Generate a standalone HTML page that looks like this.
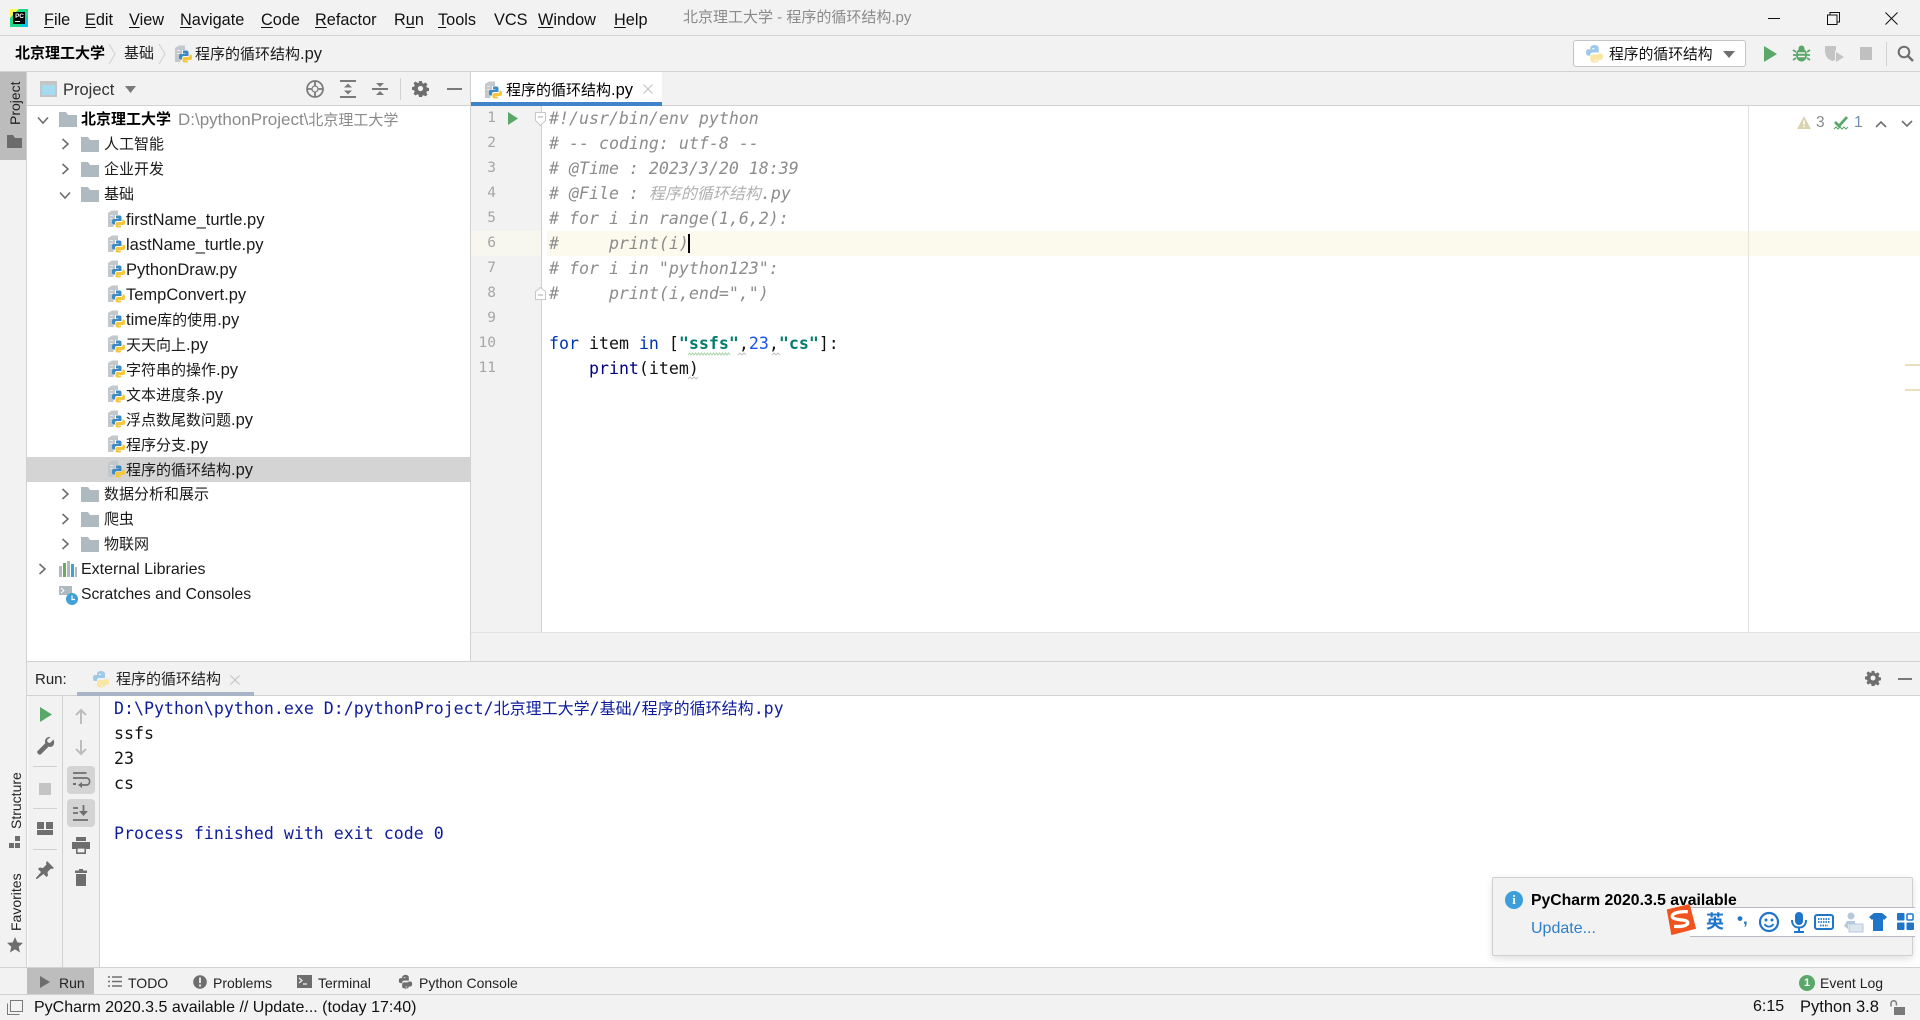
<!DOCTYPE html>
<html lang="zh"><head><meta charset="utf-8"><title>PyCharm</title>
<style>
*{box-sizing:border-box}
html,body{margin:0;padding:0;width:1920px;height:1020px;overflow:hidden;background:#fff}
body{position:relative;font-family:"Liberation Sans","Noto Sans CJK SC",sans-serif;font-size:15px;color:#1a1a1a}
.b{position:absolute}
.t{position:absolute;white-space:nowrap;line-height:24px;height:24px}
.n{margin-top:1px}
.l{font-size:16.5px}
.m{font-size:16.3px;color:#111;margin-top:1px}
.m u{text-underline-offset:2px}
.c{position:absolute;left:549px;white-space:pre;line-height:25px;height:25px;font-family:"DejaVu Sans Mono","Noto Sans CJK SC",monospace;font-size:16.6px}
.cj{font-size:16px}
.cm{font-style:italic;color:#8c8c8c}
.ln{position:absolute;left:472px;width:24px;text-align:right;line-height:25px;height:25px;font-family:"DejaVu Sans Mono",monospace;font-size:14.5px;color:#a6a6a6}
.kw{color:#0033b3}.st{color:#067d6a;font-weight:bold}.num{color:#1750eb}.fn{color:#000080}
.o{position:absolute;left:114px;white-space:pre;line-height:25px;height:25px;font-family:"DejaVu Sans Mono","Noto Sans CJK SC",monospace;font-size:16.6px;color:#111}
.o.blue{color:#0f1c9c}
svg.i{position:absolute;overflow:visible}
.r{position:absolute;transform-origin:0 0;transform:rotate(-90deg);white-space:nowrap;line-height:16px;font-size:14px;color:#222}
.bt{font-size:14px;color:#222}
</style></head><body>
<svg width="0" height="0" style="position:absolute">
<defs>
<symbol id="py" viewBox="0 0 18 18"><path d="M1 3 5 .5h6V5H8v4.500H6.500V17H1z" fill="#c2c8cc"/><path d="M3 5h3v1H3zM3 8h2.500v1H3z" fill="#e9ebec"/><path d="M9 5.500h3.500a2 2 0 0 1 2 2V11H10a2 2 0 0 0-2 2v1.500H7a2 2 0 0 1-2-2v-1.500a2 2 0 0 1 2-2h4.500V8.500H9z" fill="#3d8bc4"/><path d="M15.500 9.500H16a2 2 0 0 1 2 2v1.500a2 2 0 0 1-2 2h-4.500v.5H14v1a1 1 0 0 1-1 1h-2.500a2 2 0 0 1-2-2V14a2 2 0 0 1 2-2H14a1.500 1.500 0 0 0 1.500-1.500z" fill="#f5c73d"/></symbol>
<symbol id="pl" viewBox="0 0 18 18"><path d="M5 8V4c0-2 2-3 4-3s4 1 4 3v4H7.500C6 8 5 9 5 10v1H3c-1.500 0-2-1.500-2-3s.5-3 2-3h6V4H7" fill="#9fc9e8"/><path d="M13 9h2c1.500 0 2 1.500 2 3s-.5 3-2 3H9v1h2v-2h2v1c0 2-2 2.500-4 2.500S5 17 5 15v-3c0-1 1-2 2.500-2H11c1 0 2-.5 2-1z" fill="#f8e6a5"/></symbol>
<symbol id="fd" viewBox="0 0 18 15"><path d="M0 0h7l2 3h9v12H0z" fill="#aeb9c0"/></symbol>
<symbol id="ch" viewBox="0 0 10 12"><path d="M2.500 1 8 6l-5.500 5" fill="none" stroke="#6e6e6e" stroke-width="1.600"/></symbol>
<symbol id="cd" viewBox="0 0 12 10"><path d="M1 2.500 6 8l5-5.500" fill="none" stroke="#6e6e6e" stroke-width="1.600"/></symbol>
<symbol id="gear" viewBox="0 0 18 18"><path d="M7.500 1h3l.5 2.300 1.400.6 2-1.300 2 2-1.300 2 .6 1.400 2.300.5v3l-2.300.5-.6 1.400 1.300 2-2 2-2-1.300-1.400.6-.5 2.300h-3L7 15.700l-1.400-.6-2 1.300-2-2 1.300-2L2.300 11 0 10.500v-3L2.300 7l.6-1.400-1.300-2 2-2 2 1.300L7 3.300z" fill="#6e6e6e"/><circle cx="9" cy="9" r="2.800" fill="#f2f2f2"/></symbol>
</defs></svg>

<!-- title bar -->
<div class="b" style="left:0;top:0;width:1920px;height:71px;background:#f2f2f2"></div>
<div class="b" style="left:0;top:35px;width:1920px;height:1px;background:#d1d1d1"></div>
<div class="b" style="left:0;top:71px;width:1920px;height:1px;background:#d1d1d1"></div>
<svg class="i" style="left:10px;top:9px" width="18" height="18" viewBox="0 0 18 18"><path d="M0 0h18v18H0z" fill="#21d789"/><path d="M0 0h9L0 9z" fill="#fcf84a"/><path d="M18 18V8l-8 10z" fill="#07c3f2"/><rect x="3" y="3" width="12" height="12" fill="#000"/><rect x="5" y="12" width="5" height="1" fill="#fff"/></svg>
<div class="t" style="left:11px;top:7px;width:17px;text-align:center;color:#fff;font:bold 6.500px/20px 'Liberation Sans',sans-serif;height:20px;letter-spacing:-.2px">PC</div>
<div class="t m" style="left:44px;top:7px"><u>F</u>ile</div>
<div class="t m" style="left:85px;top:7px"><u>E</u>dit</div>
<div class="t m" style="left:129px;top:7px"><u>V</u>iew</div>
<div class="t m" style="left:180px;top:7px"><u>N</u>avigate</div>
<div class="t m" style="left:261px;top:7px"><u>C</u>ode</div>
<div class="t m" style="left:315px;top:7px"><u>R</u>efactor</div>
<div class="t m" style="left:394px;top:7px">R<u>u</u>n</div>
<div class="t m" style="left:438px;top:7px"><u>T</u>ools</div>
<div class="t m" style="left:494px;top:7px">VCS</div>
<div class="t m" style="left:538px;top:7px"><u>W</u>indow</div>
<div class="t m" style="left:614px;top:7px"><u>H</u>elp</div>
<div class="t" style="left:683px;top:6px;color:#8a8a8a">北京理工大学 - 程序的循环结构.py</div>
<div class="b" style="left:1768px;top:18px;width:12px;height:1px;background:#111"></div>
<svg class="i" style="left:1827px;top:12px" width="13" height="13" viewBox="0 0 13 13"><path d="M3 3V.5h9.500V10H10M.5 3h9.500v9.500H.5z" fill="none" stroke="#111"/></svg>
<svg class="i" style="left:1885px;top:12px" width="13" height="13" viewBox="0 0 13 13"><path d="M.5.500l12 12M12.500.500l-12 12" fill="none" stroke="#111"/></svg>

<!-- nav bar -->
<div class="t n" style="left:15px;top:41px;font-weight:bold;font-size:15px;color:#000">北京理工大学</div>
<svg class="i" style="left:108px;top:43px" width="8" height="22" viewBox="0 0 8 22"><path d="M1 1l6 10-6 10" fill="none" stroke="#cfcfcf"/></svg>
<div class="t n" style="left:124px;top:41px;font-size:15px">基础</div>
<svg class="i" style="left:158px;top:43px" width="8" height="22" viewBox="0 0 8 22"><path d="M1 1l6 10-6 10" fill="none" stroke="#cfcfcf"/></svg>
<svg class="i" style="left:174px;top:45px" width="18" height="18"><use href="#py"/></svg>
<div class="t n" style="left:195px;top:41px;font-size:15px">程序的循环结构<span class="l">.py</span></div>

<div class="b" style="left:1573px;top:40px;width:173px;height:27px;background:#fff;border:1px solid #c4c4c4;border-radius:3px"></div>
<svg class="i" style="left:1585px;top:44px" width="19" height="19"><use href="#pl"/></svg>
<div class="t n" style="left:1609px;top:42px;font-size:14.800px;color:#111">程序的循环结构</div>
<svg class="i" style="left:1723px;top:51px" width="12" height="7" viewBox="0 0 12 7"><path d="M0 0h12L6 7z" fill="#6e6e6e"/></svg>
<svg class="i" style="left:1764px;top:46px" width="13" height="16" viewBox="0 0 13 16"><path d="M0 0l13 8-13 8z" fill="#59a869"/></svg>
<svg class="i" style="left:1793px;top:45px" width="17" height="17" viewBox="0 0 17 17"><ellipse cx="8.500" cy="10" rx="5.500" ry="6.500" fill="#59a869"/><circle cx="8.500" cy="3.500" r="3" fill="#59a869"/><path d="M0 5l3 2M17 5l-3 2M0 10h3M14 10h3M0 15l3-2M17 15l-3-2" stroke="#59a869" stroke-width="1.800"/><path d="M5 8h7M5 11.500h7" stroke="#f2f2f2" stroke-width="1.400"/></svg>
<svg class="i" style="left:1825px;top:45px" width="20" height="18" viewBox="0 0 20 18"><path d="M0 1h11v4l-1 1v9l-2 1C3 15 0 11 0 6z" fill="#c4c4c4"/><path d="M11 7l8 5-8 5z" fill="#c4c4c4"/></svg>
<div class="b" style="left:1860px;top:47px;width:12px;height:13px;background:#c0c0c0"></div>
<div class="b" style="left:1886px;top:42px;width:1px;height:24px;background:#d1d1d1"></div>
<svg class="i" style="left:1897px;top:45px" width="17" height="17" viewBox="0 0 17 17"><circle cx="7" cy="7" r="5.300" fill="none" stroke="#6e6e6e" stroke-width="2"/><path d="M11 11l5 5" stroke="#6e6e6e" stroke-width="2.400"/></svg>

<!-- left strip -->
<div class="b" style="left:0;top:72px;width:27px;height:895px;background:#f2f2f2;border-right:1px solid #d1d1d1"></div>
<div class="b" style="left:0;top:72px;width:26px;height:88px;background:#bcbcbc"></div>
<div class="r" style="left:7px;top:125px">Project</div>
<svg class="i" style="left:7px;top:135px" width="15" height="13"><path d="M0 0h6l2 3h7v10H0z" fill="#6b6b6b"/></svg>
<div class="r" style="left:8px;top:829px">Structure</div>
<svg class="i" style="left:8px;top:836px" width="13" height="13" viewBox="0 0 13 13"><rect x="7" y="0" width="5" height="5" fill="#6e6e6e"/><rect x="1" y="7" width="5" height="5" fill="#6e6e6e"/><rect x="7" y="7" width="5" height="5" fill="#6e6e6e"/></svg>
<div class="r" style="left:8px;top:931px">Favorites</div>
<svg class="i" style="left:7px;top:937px" width="16" height="16" viewBox="0 0 16 16"><path d="M8 0l2.300 5.400 5.700.5-4.300 3.800 1.300 5.800L8 12.400 3 15.500l1.300-5.800L0 5.900l5.700-.5z" fill="#6e6e6e"/></svg>

<!-- project panel -->
<div class="b" style="left:27px;top:72px;width:444px;height:33px;background:#f2f2f2"></div>
<div class="b" style="left:27px;top:105px;width:444px;height:1px;background:#d1d1d1"></div>
<div class="b" style="left:470px;top:72px;width:1px;height:590px;background:#d1d1d1"></div>
<div class="b" style="left:40px;top:81px;width:17px;height:16px;background:#a5dbf0;border:2px solid #c4c4c4;border-top-width:4px"></div>
<div class="t n" style="left:63px;top:77px;font-size:16.500px;color:#333">Project</div>
<svg class="i" style="left:125px;top:86px" width="11" height="7" viewBox="0 0 11 7"><path d="M0 0h11L5.500 7z" fill="#7a7a7a"/></svg>
<svg class="i" style="left:306px;top:80px" width="18" height="18" viewBox="0 0 18 18"><circle cx="9" cy="9" r="8" fill="none" stroke="#7a7a7a" stroke-width="1.700"/><circle cx="9" cy="9" r="3" fill="none" stroke="#7a7a7a" stroke-width="1.200"/><path d="M9 1v4.500M9 12.500V17M1 9h4.500M12.500 9H17" stroke="#7a7a7a" stroke-width="1.800"/></svg>
<svg class="i" style="left:340px;top:80px" width="16" height="18" viewBox="0 0 16 18"><path d="M0 1h16M0 17h16" stroke="#7a7a7a" stroke-width="2"/><path d="M8 3.500l4 4H4zM8 14.500l4-4H4z" fill="#7a7a7a"/></svg>
<svg class="i" style="left:372px;top:80px" width="16" height="18" viewBox="0 0 16 18"><path d="M0 9h16" stroke="#7a7a7a" stroke-width="2"/><path d="M8 7L4 3h8zM8 11l4 4H4z" fill="#7a7a7a"/></svg>
<div class="b" style="left:400px;top:78px;width:1px;height:22px;background:#d1d1d1"></div>
<svg class="i" style="left:412px;top:80px" width="17" height="17"><use href="#gear"/></svg>
<div class="b" style="left:447px;top:88px;width:15px;height:2px;background:#7a7a7a"></div>

<!-- tree -->
<div class="b" style="left:27px;top:457px;width:443px;height:25px;background:#d4d4d4"></div>
<svg class="i" style="left:37px;top:115px" width="12" height="10"><use href="#cd"/></svg>
<svg class="i" style="left:59px;top:112px" width="18" height="15"><use href="#fd"/></svg>
<div class="t n" style="left:81px;top:107px;font-weight:bold;color:#000">北京理工大学</div>
<div class="t n" style="left:178px;top:107px;font-size:15px;color:#8a8a8a"><span style="font-size:17px">D:\pythonProject\</span>北京理工大学</div>

<svg class="i" style="left:60px;top:138px" width="10" height="12"><use href="#ch"/></svg>
<svg class="i" style="left:81px;top:137px" width="18" height="15"><use href="#fd"/></svg>
<div class="t n" style="left:104px;top:132px">人工智能</div>
<svg class="i" style="left:60px;top:163px" width="10" height="12"><use href="#ch"/></svg>
<svg class="i" style="left:81px;top:162px" width="18" height="15"><use href="#fd"/></svg>
<div class="t n" style="left:104px;top:157px">企业开发</div>
<svg class="i" style="left:59px;top:190px" width="12" height="10"><use href="#cd"/></svg>
<svg class="i" style="left:81px;top:187px" width="18" height="15"><use href="#fd"/></svg>
<div class="t n" style="left:104px;top:182px">基础</div>

<svg class="i" style="left:107px;top:210px" width="18" height="18"><use href="#py"/></svg><div class="t n l" style="left:126px;top:207px">firstName_turtle.py</div>
<svg class="i" style="left:107px;top:235px" width="18" height="18"><use href="#py"/></svg><div class="t n l" style="left:126px;top:232px">lastName_turtle.py</div>
<svg class="i" style="left:107px;top:260px" width="18" height="18"><use href="#py"/></svg><div class="t n l" style="left:126px;top:257px">PythonDraw.py</div>
<svg class="i" style="left:107px;top:285px" width="18" height="18"><use href="#py"/></svg><div class="t n l" style="left:126px;top:282px">TempConvert.py</div>
<svg class="i" style="left:107px;top:310px" width="18" height="18"><use href="#py"/></svg><div class="t n" style="left:126px;top:307px"><span class="l">time</span>库的使用<span class="l">.py</span></div>
<svg class="i" style="left:107px;top:335px" width="18" height="18"><use href="#py"/></svg><div class="t n" style="left:126px;top:332px">天天向上<span class="l">.py</span></div>
<svg class="i" style="left:107px;top:360px" width="18" height="18"><use href="#py"/></svg><div class="t n" style="left:126px;top:357px">字符串的操作<span class="l">.py</span></div>
<svg class="i" style="left:107px;top:385px" width="18" height="18"><use href="#py"/></svg><div class="t n" style="left:126px;top:382px">文本进度条<span class="l">.py</span></div>
<svg class="i" style="left:107px;top:410px" width="18" height="18"><use href="#py"/></svg><div class="t n" style="left:126px;top:407px">浮点数尾数问题<span class="l">.py</span></div>
<svg class="i" style="left:107px;top:435px" width="18" height="18"><use href="#py"/></svg><div class="t n" style="left:126px;top:432px">程序分支<span class="l">.py</span></div>
<svg class="i" style="left:107px;top:460px" width="18" height="18"><use href="#py"/></svg><div class="t n" style="left:126px;top:457px">程序的循环结构<span class="l">.py</span></div>

<svg class="i" style="left:60px;top:488px" width="10" height="12"><use href="#ch"/></svg>
<svg class="i" style="left:81px;top:487px" width="18" height="15"><use href="#fd"/></svg>
<div class="t n" style="left:104px;top:482px">数据分析和展示</div>
<svg class="i" style="left:60px;top:513px" width="10" height="12"><use href="#ch"/></svg>
<svg class="i" style="left:81px;top:512px" width="18" height="15"><use href="#fd"/></svg>
<div class="t n" style="left:104px;top:507px">爬虫</div>
<svg class="i" style="left:60px;top:538px" width="10" height="12"><use href="#ch"/></svg>
<svg class="i" style="left:81px;top:537px" width="18" height="15"><use href="#fd"/></svg>
<div class="t n" style="left:104px;top:532px">物联网</div>
<svg class="i" style="left:37px;top:563px" width="10" height="12"><use href="#ch"/></svg>
<svg class="i" style="left:59px;top:561px" width="18" height="16" viewBox="0 0 18 16"><rect x="0" y="5" width="3" height="11" fill="#aeb9c0"/><rect x="4" y="2" width="3" height="14" fill="#6aab5e"/><rect x="8" y="0" width="3" height="16" fill="#aeb9c0"/><rect x="12" y="3" width="3" height="13" fill="#40a0d8"/><rect x="16" y="6" width="2" height="10" fill="#aeb9c0"/></svg>
<div class="t n" style="left:81px;top:557px;font-size:16px">External Libraries</div>
<svg class="i" style="left:59px;top:586px" width="19" height="19" viewBox="0 0 19 19"><path d="M0 0h13v9H0z" fill="#aeb9c0"/><path d="M2 2l3 2.500L2 7" fill="none" stroke="#fff"/><circle cx="13" cy="13" r="6" fill="#40a0d8"/><path d="M13 9.500V13.500h3" fill="none" stroke="#fff" stroke-width="1.200"/></svg>
<div class="t n" style="left:81px;top:582px;font-size:15.700px">Scratches and Consoles</div>

<!-- editor -->
<div class="b" style="left:471px;top:72px;width:1449px;height:33px;background:#f2f2f2"></div>
<div class="b" style="left:471px;top:105px;width:1449px;height:1px;background:#d1d1d1"></div>
<div class="b" style="left:471px;top:72px;width:191px;height:31px;background:#fff"></div>
<div class="b" style="left:471px;top:102px;width:191px;height:4px;background:#4083c9"></div>
<svg class="i" style="left:484px;top:81px" width="18" height="18"><use href="#py"/></svg>
<div class="t n" style="left:506px;top:77px;font-size:15px;color:#000">程序的循环结构<span class="l">.py</span></div>
<svg class="i" style="left:643px;top:84px" width="10" height="10" viewBox="0 0 10 10"><path d="M.5.500l9 9M9.500.500l-9 9" fill="none" stroke="#c4c4c4" stroke-width="1.200"/></svg>

<div class="b" style="left:471px;top:106px;width:70px;height:526px;background:#f2f2f2"></div>
<div class="b" style="left:541px;top:106px;width:1px;height:526px;background:#d1d1d1"></div>
<div class="b" style="left:1748px;top:106px;width:1px;height:526px;background:#e0e0e0"></div>
<div class="b" style="left:471px;top:231px;width:70px;height:25px;background:#f7f7f0"></div>
<div class="b" style="left:547px;top:231px;width:1373px;height:25px;background:#fcfaed"></div>
<div class="b" style="left:1748px;top:231px;width:1px;height:25px;background:#e8e6d8"></div>

<div class="ln" style="top:106px">1</div><div class="ln" style="top:131px">2</div><div class="ln" style="top:156px">3</div><div class="ln" style="top:181px">4</div><div class="ln" style="top:206px">5</div><div class="ln" style="top:231px">6</div><div class="ln" style="top:256px">7</div><div class="ln" style="top:281px">8</div><div class="ln" style="top:306px">9</div><div class="ln" style="top:331px">10</div><div class="ln" style="top:356px">11</div>
<svg class="i" style="left:508px;top:112px" width="10" height="13" viewBox="0 0 10 13"><path d="M0 0l10 6.500L0 13z" fill="#59a869"/></svg>
<svg class="i" style="left:535px;top:112px" width="11" height="14" viewBox="0 0 11 14"><path d="M.5.500h10v8l-5 5-5-5z" fill="#fff" stroke="#c8c8c8"/><path d="M3 5h5" stroke="#a8a8a8"/></svg>
<svg class="i" style="left:535px;top:287px" width="11" height="13" viewBox="0 0 11 13"><path d="M.5 12.500h10v-8l-5-4-5 4z" fill="#fff" stroke="#c8c8c8"/><path d="M3 8h5" stroke="#a8a8a8"/></svg>

<div class="c cm" style="top:106px">#!/usr/bin/env python</div>
<div class="c cm" style="top:131px"># -- coding: utf-8 --</div>
<div class="c cm" style="top:156px"># @Time : 2023/3/20 18:39</div>
<div class="c cm" style="top:181px"># @File : <span class="cj" style="color:#b0b0b0">程序的循环结构</span>.py</div>
<div class="c cm" style="top:206px"># for i in range(1,6,2):</div>
<div class="c cm" style="top:231px">#     print(i)</div>
<div class="c cm" style="top:256px"># for i in "python123":</div>
<div class="c cm" style="top:281px">#     print(i,end=",")</div>
<div class="c" style="top:331px;color:#111"><span class="kw">for</span> item <span class="kw">in</span> [<span class="st">"ssfs"</span>,<span class="num">23</span>,<span class="st">"cs"</span>]:</div>
<div class="c" style="top:356px;color:#111">    <span class="fn">print</span>(item)</div>
<svg class="i" style="left:688px;top:352px" width="40" height="4" viewBox="0 0 40 4"><path d="M0 3l1.500-2 1.500 2 1.500-2 1.500 2 1.500-2 1.500 2 1.500-2 1.500 2 1.500-2 1.500 2 1.500-2 1.500 2 1.500-2 1.500 2 1.500-2 1.500 2 1.500-2 1.500 2 1.500-2 1.500 2 1.500-2 1.500 2 1.500-2 1.500 2 1.500-2 1.500 2 1.500-2 1.500 2" fill="none" stroke="#a8d5a8"/></svg>
<svg class="i" style="left:738px;top:352px" width="8" height="4" viewBox="0 0 8 4"><path d="M0 3l2-2 2 2 2-2 2 2" fill="none" stroke="#c4c4c4"/></svg>
<svg class="i" style="left:772px;top:352px" width="8" height="4" viewBox="0 0 8 4"><path d="M0 3l2-2 2 2 2-2 2 2" fill="none" stroke="#c4c4c4"/></svg>
<svg class="i" style="left:688px;top:376px" width="10" height="4" viewBox="0 0 10 4"><path d="M0 3l2-2 2 2 2-2 2 2 2-2" fill="none" stroke="#c4c4c4"/></svg>
<div class="b" style="left:688px;top:234px;width:2px;height:19px;background:#000"></div>

<svg class="i" style="left:1797px;top:116px" width="14" height="13" viewBox="0 0 14 13"><path d="M7 0l7 13H0z" fill="#dbd3b0"/><path d="M7 4.500v4M7 9.800v1.500" stroke="#fff" stroke-width="1.500"/></svg>
<div class="t" style="left:1816px;top:111px;color:#8a8a8a;font-size:15.500px">3</div>
<svg class="i" style="left:1834px;top:116px" width="15" height="15" viewBox="0 0 15 15"><path d="M1 6l4 4 8-9" fill="none" stroke="#59a869" stroke-width="2.800"/><path d="M0 13l2-2 2 2 2-2 2 2 2-2 2 2 2-2" fill="none" stroke="#59a869"/></svg>
<div class="t" style="left:1854px;top:111px;color:#6f8fb5;font-size:15.500px">1</div>
<svg class="i" style="left:1875px;top:120px" width="12" height="8" viewBox="0 0 12 8"><path d="M1 7l5-5 5 5" fill="none" stroke="#6e6e6e" stroke-width="1.600"/></svg>
<svg class="i" style="left:1901px;top:120px" width="12" height="8" viewBox="0 0 12 8"><path d="M1 1l5 5 5-5" fill="none" stroke="#6e6e6e" stroke-width="1.600"/></svg>
<div class="b" style="left:1905px;top:364px;width:15px;height:2px;background:#e8dfc0"></div>
<div class="b" style="left:1905px;top:389px;width:15px;height:2px;background:#e8dfc0"></div>

<div class="b" style="left:471px;top:632px;width:1449px;height:30px;background:#f2f2f2;border-top:1px solid #e4e4e4"></div>
<div class="b" style="left:27px;top:661px;width:1893px;height:1px;background:#d1d1d1"></div>

<!-- run panel -->
<div class="b" style="left:27px;top:662px;width:1893px;height:34px;background:#f2f2f2"></div>
<div class="b" style="left:27px;top:695px;width:1893px;height:1px;background:#d1d1d1"></div>
<div class="t n" style="left:35px;top:667px;color:#222">Run:</div>
<svg class="i" style="left:92px;top:670px" width="18" height="18"><use href="#pl"/></svg>
<div class="t n" style="left:116px;top:667px;color:#222">程序的循环结构</div>
<svg class="i" style="left:230px;top:675px" width="10" height="10" viewBox="0 0 10 10"><path d="M.5.500l9 9M9.500.500l-9 9" fill="none" stroke="#c4c4c4" stroke-width="1.200"/></svg>
<div class="b" style="left:77px;top:692px;width:177px;height:4px;background:#a9b5c6"></div>
<svg class="i" style="left:1865px;top:670px" width="16" height="16"><use href="#gear"/></svg>
<div class="b" style="left:1898px;top:678px;width:14px;height:2px;background:#7a7a7a"></div>

<div class="b" style="left:28px;top:696px;width:72px;height:271px;background:#f2f2f2"></div>
<div class="b" style="left:62px;top:696px;width:1px;height:271px;background:#d1d1d1"></div>
<div class="b" style="left:99px;top:696px;width:1px;height:271px;background:#d1d1d1"></div>
<svg class="i" style="left:40px;top:707px" width="12" height="15" viewBox="0 0 12 15"><path d="M0 0l12 7.500L0 15z" fill="#59a869"/></svg>
<svg class="i" style="left:37px;top:737px" width="17" height="18" viewBox="0 0 17 18"><path d="M16.500 2.500 13 6l-2.300-.7L10 3l3.500-3C10.500-.5 8 1.500 8 4.500c0 .7.100 1.300.3 1.800L.8 13.800a1.900 1.900 0 0 0 0 2.700l.6.600a1.900 1.900 0 0 0 2.700 0l7.500-7.500c.5.200 1.100.3 1.800.3 3 0 4.700-3.400 3.100-7.400z" fill="#6e6e6e"/></svg>
<div class="b" style="left:33px;top:766px;width:24px;height:1px;background:#d1d1d1"></div>
<div class="b" style="left:39px;top:783px;width:12px;height:12px;background:#c4c4c4"></div>
<div class="b" style="left:33px;top:808px;width:24px;height:1px;background:#d1d1d1"></div>
<svg class="i" style="left:37px;top:822px" width="16" height="13" viewBox="0 0 16 13"><rect width="7" height="7" fill="#6e6e6e"/><rect x="9" width="7" height="7" fill="#6e6e6e"/><rect y="8" width="16" height="5" fill="#6e6e6e"/></svg>
<div class="b" style="left:33px;top:849px;width:24px;height:1px;background:#d1d1d1"></div>
<svg class="i" style="left:36px;top:861px" width="18" height="18" viewBox="0 0 18 18"><path d="M11 0l7 7-2 1-1-.5-3.500 3.500.5 3.500-1.500 1.500-3-3L1 18l-1 0 0-1 5-6-3-3 1.500-1.500L7 7l3.500-3.500L10 2z" fill="#6e6e6e"/></svg>

<svg class="i" style="left:75px;top:708px" width="12" height="16" viewBox="0 0 12 16"><path d="M6 16V2M1 7l5-5 5 5" fill="none" stroke="#bdbdbd" stroke-width="2"/></svg>
<svg class="i" style="left:75px;top:740px" width="12" height="16" viewBox="0 0 12 16"><path d="M6 0v14M1 9l5 5 5-5" fill="none" stroke="#bdbdbd" stroke-width="2"/></svg>
<div class="b" style="left:67px;top:766px;width:28px;height:28px;background:#d4d4d4;border-radius:4px"></div>
<svg class="i" style="left:73px;top:772px" width="16" height="16" viewBox="0 0 16 16"><path d="M0 1h15M0 6h15a3.500 3.500 0 0 1 0 7H9" fill="none" stroke="#6e6e6e" stroke-width="1.700" transform="scale(.9 1)"/><path d="M5 13l4-3v6z" fill="#6e6e6e"/><rect y="11" width="3" height="2" fill="#6e6e6e"/></svg>
<div class="b" style="left:67px;top:799px;width:28px;height:28px;background:#d4d4d4;border-radius:4px"></div>
<svg class="i" style="left:73px;top:805px" width="16" height="16" viewBox="0 0 16 16"><path d="M0 3h5M0 8h5M0 15h15" fill="none" stroke="#6e6e6e" stroke-width="1.800"/><path d="M10.500 0v8" stroke="#6e6e6e" stroke-width="1.800"/><path d="M6 6h9l-4.500 5z" fill="#6e6e6e"/></svg>
<svg class="i" style="left:72px;top:837px" width="18" height="17" viewBox="0 0 18 17"><path d="M4 0h10v4H4z" fill="#6e6e6e"/><path d="M0 5h18v7h-4v-2H4v2H0z" fill="#6e6e6e"/><path d="M4.800 10.800h8.400v5.400H4.800z" fill="none" stroke="#6e6e6e" stroke-width="1.600"/></svg>
<svg class="i" style="left:75px;top:869px" width="12" height="17" viewBox="0 0 12 17"><path d="M4 0h4v1.500h4V4H0V1.500h4zM1 5h10v12H1z" fill="#6e6e6e"/></svg>

<div class="o blue" style="top:696px">D:\Python\python.exe D:/pythonProject/<span class="cj">北京理工大学</span>/<span class="cj">基础</span>/<span class="cj">程序的循环结构</span>.py</div>
<div class="o" style="top:721px">ssfs</div>
<div class="o" style="top:746px">23</div>
<div class="o" style="top:771px">cs</div>
<div class="o blue" style="top:821px">Process finished with exit code 0</div>

<!-- bottom strip -->
<div class="b" style="left:0;top:967px;width:1920px;height:27px;background:#f2f2f2"></div>
<div class="b" style="left:0;top:967px;width:1920px;height:1px;background:#d1d1d1"></div>
<div class="b" style="left:27px;top:968px;width:67px;height:26px;background:#bdbdbd"></div>
<svg class="i" style="left:40px;top:976px" width="10" height="12" viewBox="0 0 10 12"><path d="M0 0l10 6-10 6z" fill="#6e6e6e"/></svg>
<div class="t bt" style="left:59px;top:971px">Run</div>
<svg class="i" style="left:108px;top:976px" width="14" height="11" viewBox="0 0 14 11"><path d="M0 1h2M4 1h10M0 5.500h2M4 5.500h10M0 10h2M4 10h10" stroke="#6e6e6e" stroke-width="1.600"/></svg>
<div class="t bt" style="left:128px;top:971px">TODO</div>
<svg class="i" style="left:193px;top:975px" width="14" height="14" viewBox="0 0 14 14"><circle cx="7" cy="7" r="6.800" fill="#6e6e6e"/><path d="M7 2.500v5.500M7 9.500v2" stroke="#f2f2f2" stroke-width="1.800"/></svg>
<div class="t bt" style="left:213px;top:971px">Problems</div>
<svg class="i" style="left:297px;top:975px" width="15" height="13" viewBox="0 0 15 13"><rect width="15" height="13" fill="#6e6e6e"/><path d="M2 3l3 2.500L2 8M6 9h4" fill="none" stroke="#f2f2f2" stroke-width="1.200"/></svg>
<div class="t bt" style="left:318px;top:971px">Terminal</div>
<svg class="i" style="left:398px;top:974px" width="15" height="15" viewBox="0 0 18 18"><path d="M5 8V4c0-2 2-3 4-3s4 1 4 3v4H7.500C6 8 5 9 5 10v1H3c-1.500 0-2-1.500-2-3s.5-3 2-3h6V4H7" fill="#6e6e6e"/><path d="M13 9h2c1.500 0 2 1.500 2 3s-.5 3-2 3H9v1h2v-2h2v1c0 2-2 2.500-4 2.500S5 17 5 15v-3c0-1 1-2 2.500-2H11c1 0 2-.5 2-1z" fill="#6e6e6e"/></svg>
<div class="t bt" style="left:419px;top:971px">Python Console</div>
<div class="b" style="left:1799px;top:975px;width:16px;height:16px;border-radius:50%;background:#59a869;color:#fff;font:bold 11px/16px 'Liberation Sans',sans-serif;text-align:center">1</div>
<div class="t bt" style="left:1820px;top:971px">Event Log</div>

<!-- status -->
<div class="b" style="left:0;top:994px;width:1920px;height:26px;background:#f2f2f2"></div>
<div class="b" style="left:0;top:994px;width:1920px;height:1px;background:#d1d1d1"></div>
<svg class="i" style="left:7px;top:1000px" width="16" height="15" viewBox="0 0 16 15"><path d="M3.500.500h12v11h-12z" fill="#f2f2f2" stroke="#7a7a7a"/><path d="M.5 3.500v11h12" fill="none" stroke="#7a7a7a"/></svg>
<div class="t" style="left:34px;top:996px;font-size:16px;color:#111">PyCharm 2020.3.5 available // Update... (today 17:40)</div>
<div class="t" style="left:1753px;top:995px;font-size:16px;color:#111">6:15</div>
<div class="t" style="left:1800px;top:995px;font-size:16.500px;color:#111">Python 3.8</div>
<svg class="i" style="left:1890px;top:1000px" width="15" height="15" viewBox="0 0 15 15"><path d="M1 6.500V3.500a2.700 2.700 0 0 1 5.400 0v2" fill="none" stroke="#7a7a7a" stroke-width="1.500"/><rect x="4" y="7" width="11" height="8" fill="#7a7a7a"/></svg>

<!-- notification -->
<div class="b" style="left:1492px;top:877px;width:421px;height:79px;background:#f2f2f2;border:1px solid #cfcfcf;border-radius:2px;box-shadow:0 3px 8px rgba(0,0,0,.12)"></div>
<div class="b" style="left:1505px;top:891px;width:18px;height:18px;border-radius:50%;background:#3d9fd9;color:#fff;font:bold 13px/18px 'Liberation Serif',serif;text-align:center">i</div>
<div class="t n" style="left:1531px;top:888px;font-weight:bold;font-size:15.750px;color:#000">PyCharm 2020.3.5 available</div>
<div class="t" style="left:1531px;top:917px;font-size:16px;color:#2f7fc8">Update...</div>

<!-- IME bar -->
<div class="b" style="left:1690px;top:907px;width:225px;height:30px;background:#fff;border-top:1px solid #b8b8c4;border-bottom:1px solid #b8b8c4"></div>
<svg class="i" style="left:1664px;top:903px" width="33" height="34" viewBox="0 0 36 35"><path d="M3 6 28 0l7 27-27 7z" fill="#f0541e"/><path d="M26 8.500C18 8 9 9.500 9 13.500c0 5 17 2.500 17 7 0 3.500-8 4.500-15 4" fill="none" stroke="#fff" stroke-width="3.600"/></svg>
<div class="t" style="left:1706px;top:910px;font-size:18px;font-weight:bold;color:#1f76c9">英</div>
<div class="t" style="left:1737px;top:907px;font-size:17px;font-weight:bold;color:#1f76c9">•,</div>
<svg class="i" style="left:1759px;top:912px" width="20" height="20" viewBox="0 0 20 20"><circle cx="10" cy="10" r="9" fill="none" stroke="#1f76c9" stroke-width="2.200"/><circle cx="7" cy="8" r="1.500" fill="#1f76c9"/><circle cx="13" cy="8" r="1.500" fill="#1f76c9"/><path d="M5.500 12c2 3.500 7 3.500 9 0" fill="none" stroke="#1f76c9" stroke-width="1.800"/></svg>
<svg class="i" style="left:1791px;top:912px" width="16" height="21" viewBox="0 0 16 21"><rect x="4" y="0" width="8" height="13" rx="4" fill="#1f76c9"/><path d="M1 8c0 5 3 7.500 7 7.500S15 13 15 8M8 15.500V20M3 20h10" fill="none" stroke="#1f76c9" stroke-width="2"/></svg>
<svg class="i" style="left:1814px;top:914px" width="20" height="16" viewBox="0 0 20 16"><rect x="1" y="1" width="18" height="14" rx="2" fill="none" stroke="#1f76c9" stroke-width="2"/><path d="M4 5h12M4 8h12M6 11.500h8" stroke="#1f76c9" stroke-width="1.800" stroke-dasharray="1.500 1"/></svg>
<svg class="i" style="left:1843px;top:912px" width="20" height="20" viewBox="0 0 20 20"><circle cx="8" cy="4" r="3.500" fill="#b8c8dc"/><path d="M1 14l3-5h8v3H5v5z" fill="#b8c8dc"/><rect x="6" y="12" width="14" height="8" fill="#dce4ee" stroke="#b8c8dc"/></svg>
<svg class="i" style="left:1869px;top:913px" width="18" height="18" viewBox="0 0 18 18"><path d="M5 0h8l5 4-3 3-1-1v12H4V6L3 7 0 4z" fill="#1f76c9"/></svg>
<svg class="i" style="left:1897px;top:913px" width="17" height="17" viewBox="0 0 17 17"><rect width="7.500" height="7.500" rx="1" fill="#1f76c9"/><rect x="10" y="1" width="6" height="6" rx="1" fill="none" stroke="#1f76c9" stroke-width="1.500"/><rect y="9.500" width="7.500" height="7.500" rx="1" fill="#1f76c9"/><rect x="9.500" y="9.500" width="7.500" height="7.500" rx="1" fill="#1f76c9"/></svg>
</body></html>
